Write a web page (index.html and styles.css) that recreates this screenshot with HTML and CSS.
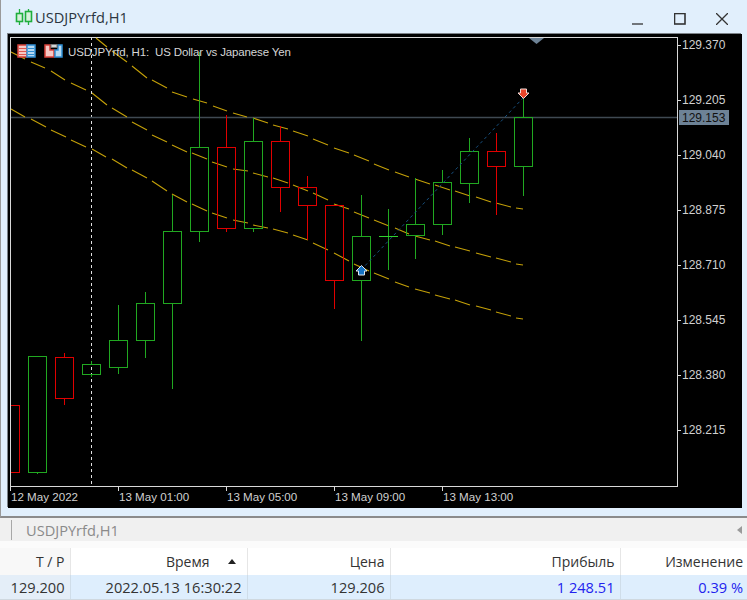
FILE: index.html
```html
<!DOCTYPE html>
<html lang="ru">
<head>
<meta charset="utf-8">
<title>USDJPYrfd,H1</title>
<link rel="stylesheet" href="styles.css">
</head>
<body>
<section class="window">
  <header class="titlebar">
    <svg class="app-icon" viewBox="0 0 20 20" width="20" height="20">
      <path class="i-wick" d="M5.500 2V18M14.500 2V18"/>
      <rect class="i-body" x="2.500" y="6.500" width="6" height="8"/>
      <rect class="i-body" x="11.500" y="4.500" width="6" height="10"/>
    </svg>
    <span class="title">USDJPYrfd,H1</span>
    <div class="controls">
      <svg viewBox="0 0 12 12" width="12" height="12" class="ctl ctl-min"><path d="M0 11H11"/></svg>
      <svg viewBox="0 0 12 12" width="12" height="12" class="ctl ctl-max"><rect x="0.500" y="0.500" width="10.500" height="10.500"/></svg>
      <svg viewBox="0 0 12 12" width="12" height="12" class="ctl ctl-close"><path d="M0 0L12 12M12 0L0 12"/></svg>
    </div>
  </header>
  <div class="chart">
    <svg class="plot" viewBox="8 34 734 474" width="734" height="474">
      <rect class="frame" x="10.500" y="37.500" width="667" height="449"/>
      <path class="crosshair" d="M91.500 37V486"/>
      <path class="priceline" d="M11 117.500H677"/>
      <path class="ma" d="M96 38L107 47M112 51L127 62M132 66L147 78M152 80L167 88M172 92L187 97M193 99L207 103M213 106L227 111M233 113L247 117M253 118L268 123M273 125L288 129M293 131L308 136M313 139L328 145M334 148L349 153M354 155L369 161M374 164L389 170M395 172L409 177M415 179L430 184M435 185L450 190M455 191L470 196M476 197L491 202M496 203L511 207M516 208L523 209"/>
      <path class="ma" d="M11 52L25 59M31 62L45 68M51 71L65 80M71 83L86 90M92 93L107 105M112 108L127 117M132 122L147 130M152 135L167 142M172 145L187 152M192 153L207 159M212 162L227 167M233 169L248 171M253 173L268 177M273 178L288 183M293 185L308 191M313 193L328 200M334 204L349 209M354 212L369 218M374 220L389 226M395 228L409 234M415 236L430 240M435 241L450 246M455 247L470 251M476 253L491 257M496 258L511 262M516 264L523 265"/>
      <path class="ma" d="M11 109L25 117M31 119L46 127M51 130L66 137M71 140L86 147M92 149L106 157M112 159L127 168M132 170L147 178M152 181L167 191M172 194L187 202M192 204L207 211M212 213L227 218M233 220L248 223M253 225L268 228M273 229L288 233M293 235L308 240M313 243L328 250M334 253L349 261M354 264L369 271M374 273L389 279M395 282L409 287M415 289L430 293M435 295L450 299M455 300L470 305M476 306L491 310M496 312L511 316M516 318L523 319"/>
      <g class="bull">
        <path d="M37.500 472V474M91.500 361V364M91.500 374V377M118.500 305V340M118.500 367V374M145.500 292V303M145.500 340V358M172.500 195V231M172.500 303V389M199.500 52V147M199.500 231V242M253.500 118V141M253.500 228V232M361.500 195V236M361.500 280V341M388.500 209V270M415.500 178V224M415.500 235V259M442.500 170V182M442.500 224V235M469.500 138V151M469.500 183V203M523.500 98V117M523.500 166V196"/>
        <rect x="28.500" y="356.500" width="18" height="116"/>
        <rect x="82.500" y="364.500" width="18" height="10"/>
        <rect x="109.500" y="340.500" width="18" height="27"/>
        <rect x="136.500" y="303.500" width="18" height="37"/>
        <rect x="163.500" y="231.500" width="18" height="72"/>
        <rect x="190.500" y="147.500" width="18" height="84"/>
        <rect x="244.500" y="141.500" width="18" height="87"/>
        <rect x="352.500" y="236.500" width="18" height="44"/>
        <rect x="406.500" y="224.500" width="18" height="11"/>
        <rect x="433.500" y="182.500" width="18" height="42"/>
        <rect x="460.500" y="151.500" width="18" height="32"/>
        <rect x="514.500" y="117.500" width="18" height="49"/>
      </g>
      <path class="doji" d="M379 236.500H398"/>
      <g class="bear">
        <path d="M64.500 353V357M64.500 398V405M226.500 115V147M226.500 228V232M280.500 126V141M280.500 187V212M307.500 176V187M307.500 205V240M334.500 280V309M496.500 133V151M496.500 166V215"/>
        <path d="M11 405.500H19.500V472.500H11"/>
        <rect x="55.500" y="357.500" width="18" height="41"/>
        <rect x="217.500" y="147.500" width="18" height="81"/>
        <rect x="271.500" y="141.500" width="18" height="46"/>
        <rect x="298.500" y="187.500" width="18" height="18"/>
        <rect x="325.500" y="205.500" width="18" height="75"/>
        <rect x="487.500" y="151.500" width="18" height="15"/>
      </g>
      <path class="tradeline" d="M361 270L523 98"/>
      <path class="arrow-buy" d="M361.500 265.500L367 271H364.500V275H358.500V271H356Z"/>
      <path class="arrow-sell" d="M523.500 98.500L518 93H520.500V89H526.500V93H529Z"/>
      <path class="marker" d="M529 38H544L536.500 44Z"/>

      <g class="legend-icon">
        <rect class="li-red" x="18" y="45" width="9" height="12"/>
        <rect class="li-blue" x="27" y="45" width="8" height="12"/>
        <path class="li-lines-r" d="M19 48.500H26.500M19 51.500H26.500M19 54.500H26.500"/>
        <path class="li-lines-b" d="M28 48.500H34M28 51.500H34M28 54.500H34"/>
      </g>
      <g class="legend-icon">
        <path class="li-red" d="M45 45H50V50H54V57H45Z"/>
        <path class="li-blue" d="M55 50H58V45H62V57H55Z"/>
        <rect class="li-grey" x="51" y="44.500" width="6" height="3"/>
      </g>
      <text class="legend" x="68" y="55.500">USDJPYrfd, H1:  US Dollar vs Japanese Yen</text>

      <path class="tick" d="M677 45.500H681M677 100.500H681M677 155.500H681M677 210.500H681M677 265.500H681M677 320.500H681M677 375.500H681M677 430.500H681M118.500 486V491M226.500 486V491M334.500 486V491M442.500 486V491M10.500 486V491"/>
      <g class="axis">
        <text x="682" y="49">129.370</text>
        <text x="682" y="104">129.205</text>
        <text x="682" y="159">129.040</text>
        <text x="682" y="214">128.875</text>
        <text x="682" y="269">128.710</text>
        <text x="682" y="324">128.545</text>
        <text x="682" y="379">128.380</text>
        <text x="682" y="434">128.215</text>
      </g>
      <g class="axis dates">
        <text x="11" y="500.500">12 May 2022</text>
        <text x="119" y="500.500">13 May 01:00</text>
        <text x="227" y="500.500">13 May 05:00</text>
        <text x="335" y="500.500">13 May 09:00</text>
        <text x="443" y="500.500">13 May 13:00</text>
      </g>
      <rect class="price-tag" x="679" y="110" width="50" height="15"/>
      <text class="price-text" x="682" y="122">129.153</text>
    </svg>
  </div>
</section>
<nav class="tabs">
  <span class="tab">USDJPYrfd,H1</span>
  <svg class="tab-arrow" viewBox="0 0 5 8" width="5" height="8"><path d="M5 0V8L0 4Z"/></svg>
</nav>
<table class="positions">
  <thead>
    <tr>
      <th class="c1">T / P</th>
      <th class="c2"><span>Время</span><i class="sort"></i></th>
      <th class="c3">Цена</th>
      <th class="c4">Прибыль</th>
      <th class="c5">Изменение</th>
    </tr>
  </thead>
  <tbody>
    <tr>
      <td class="c1">129.200</td>
      <td class="c2">2022.05.13 16:30:22</td>
      <td class="c3">129.206</td>
      <td class="c4 gain">1 248.51</td>
      <td class="c5 gain">0.39 %</td>
    </tr>
  </tbody>
</table>
</body>
</html>
```
FILE: styles.css
```css
* { box-sizing: border-box; }
html, body { margin: 0; padding: 0; }
body {
  width: 747px;
  height: 600px;
  overflow: hidden;
  background: #fff;
  font-family: "Open Sans", "Liberation Sans", sans-serif;
  color: #333;
}
.window {
  height: 518px;
  background: #e1effc;
  border-bottom: 2px solid #8b8b8b;
  border-left: 1px solid #9a9a9a;
}
.titlebar {
  height: 34px;
  display: flex;
  align-items: center;
  padding-left: 13px;
}
.app-icon { margin-right: 1px; }
.i-wick { stroke: #1fae3c; stroke-width: 1.300; fill: none; }
.i-body { stroke: #1fae3c; fill: #d8f0dc; stroke-width: 1.600; }
.title { font-size: 14.600px; color: #2b3540; }
.controls {
  margin-left: auto;
  margin-top: 4px;
  display: flex;
  align-items: center;
  gap: 30px;
  padding-right: 19px;
}
.ctl path, .ctl rect { fill: none; stroke: #333; stroke-width: 1.300; }
.ctl-max rect { stroke-width: 1.600; }
.chart {
  margin-left: 7px;
  margin-right: 5px;
  height: 474px;
  background: #000;
  box-shadow: -1px -1px 0 #7c8288;
}
.plot { display: block; }
.frame { fill: #000; stroke: #d8d8d8; stroke-width: 1; }
.crosshair { stroke: #e0e0e0; stroke-width: 1; stroke-dasharray: 3 3; }
.priceline { stroke: #3f4952; stroke-width: 1.400; }
.ma { fill: none; stroke: #c4a008; stroke-width: 1.100; }
.bull rect, .bear rect, .bear path, .bull path { fill: none; stroke-width: 1; shape-rendering: crispEdges; }
.bull rect, .bull path { stroke: #21a821; }
.bear rect, .bear path { stroke: #e00000; }
.doji { stroke: #2fd02f; stroke-width: 1; shape-rendering: crispEdges; }
.tradeline { stroke: #17507f; stroke-width: 1; stroke-dasharray: 3 3; fill: none; }
.arrow-buy { fill: #1573c4; stroke: #dfe8ef; stroke-width: 1; }
.arrow-sell { fill: #e8452a; stroke: #f2dcd8; stroke-width: 1; }
.marker { fill: #6d8296; }
.li-red { fill: #f6c8c4; stroke: #d8413a; stroke-width: 1.500; }
.li-blue { fill: #b6d9f2; stroke: #2f8fd3; stroke-width: 1.500; }
.li-grey { fill: #d4d4d4; stroke: #777; stroke-width: 1; }
.li-lines-r { stroke: #e05850; stroke-width: 1; }
.li-lines-b { stroke: #2f8fd3; stroke-width: 1; }
.legend { font: 11.500px "Liberation Sans", sans-serif; fill: #d6d6d6; white-space: pre; letter-spacing: -0.150px; }
.tick { stroke: #d8d8d8; stroke-width: 1; fill: none; }
.axis text { font: 12px "Liberation Sans", sans-serif; fill: #d0d0d0; }
.axis.dates text { font-size: 11.600px; }
.price-tag { fill: #6d8296; }
.price-text { font: 12px "Liberation Sans", sans-serif; fill: #111; }
.tabs {
  height: 30px;
  background: #f0f0f0;
  display: flex;
  align-items: center;
  padding: 0 5px 0 11px;
  border-bottom: 7px solid #fbfbfb;
}
.tab {
  border-left: 1px solid #a8a8a8;
  padding-left: 14px;
  font-size: 14.600px;
  line-height: 20px;
  color: #8a8a8a;
}
.tab-arrow { margin-left: auto; fill: #9a9a9a; }
.positions {
  border-collapse: collapse;
  table-layout: fixed;
  width: 747px;
  font-size: 14px;
}
.positions th, .positions td {
  text-align: right;
  padding: 0 5px 0 0;
  font-weight: 400;
  color: #333;
  border-right: 1px solid #e6e6e6;
}
.positions th { height: 27px; background: #fff; }
.positions td { height: 24px; background: #deeefd; font-size: 14.600px; border-bottom: 1px solid #cfd8df; border-right-color: #cfdde9; }
.positions th.c5, .positions td.c5 { border-right: 0; padding-right: 4px; }
.positions th.c1 { background: #f8f8f8; }
.positions td.c1 { background: #e4eef8; }
.c1 { width: 70px; }
.c2 { width: 177px; }
.c3 { width: 143px; }
.c4 { width: 230px; }
.positions td.gain { color: #2222ee; }
.c2 span { display: inline-block; margin-right: 32px; }
.positions th.c2 { position: relative; }
.sort {
  position: absolute;
  right: 11px;
  top: 11px;
  border: 4px solid transparent;
  border-top: 0;
  border-bottom: 5px solid #222;
}
```
